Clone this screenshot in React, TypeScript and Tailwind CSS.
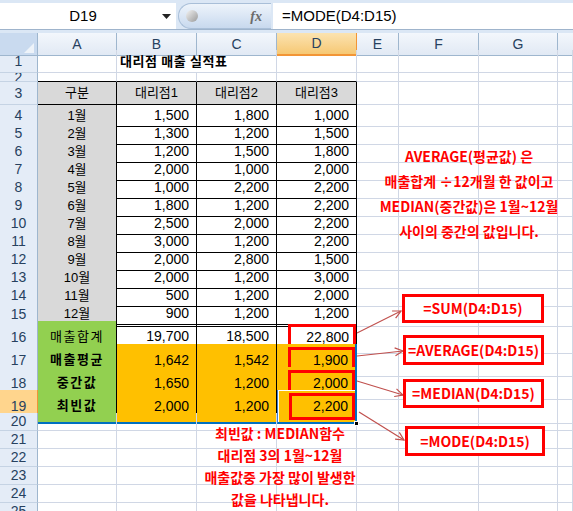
import React from "react";

const COLS = "grid grid-cols-[38px_79px_80px_80px_80px_42px_80px_79px_1fr]";
const GRID = "border-r border-b border-[#d0d7e5]";
const RED = "font-['Noto_Sans_CJK_KR',sans-serif] font-bold text-[14px] text-[#ff0000] whitespace-nowrap";

const months: [string, string, string, string][] = [
  ["1월", "1,500", "1,800", "1,000"],
  ["2월", "1,300", "1,200", "1,500"],
  ["3월", "1,200", "1,500", "1,800"],
  ["4월", "2,000", "1,000", "2,000"],
  ["5월", "1,000", "2,200", "2,200"],
  ["6월", "1,800", "1,200", "2,200"],
  ["7월", "2,500", "2,000", "2,200"],
  ["8월", "3,000", "1,200", "2,200"],
  ["9월", "2,000", "2,800", "1,500"],
  ["10월", "2,000", "1,200", "3,000"],
  ["11월", "500", "1,200", "2,000"],
  ["12월", "900", "1,200", "1,200"],
];

function RowHead({ n, active }: { n: number; active?: boolean }) {
  return (
    <div
      className={
        active
          ? "flex items-center justify-center overflow-hidden border-r border-b border-[#f29536] bg-[#ffd58d] text-[14px] text-[#27415f]"
          : "flex items-center justify-center overflow-hidden border-r border-b border-r-[#9eb6ce] border-b-[#c5d3e4] bg-[#e4ecf7] text-[14px] text-[#27415f]"
      }
    >
      {n}
    </div>
  );
}

function Empty({ n }: { n: number }) {
  return (
    <>
      {Array.from({ length: n }).map((_, i) => (
        <div key={i} className={GRID} />
      ))}
    </>
  );
}

function ColHead({ c, active }: { c: string; active?: boolean }) {
  return (
    <div
      className={
        active
          ? "flex items-center justify-center border-r border-b-2 border-r-[#f29536] border-b-[#f29536] bg-gradient-to-b from-[#fbe3b0] to-[#f6c873] text-[14px] text-[#27415f]"
          : "flex items-center justify-center border-r border-b border-[#9eb6ce] bg-gradient-to-b from-[#f3f7fc] to-[#e1e9f4] text-[14px] text-[#27415f]"
      }
    >
      {c}
    </div>
  );
}

function RedBox({ v, top }: { v: string; top: string }) {
  return (
    <div className={`flex items-stretch pl-[11px] ${top}`}>
      <div className="flex flex-1 items-center justify-end border-[3px] border-[#ff0000] pr-[4px] text-[14px]">
        {v}
      </div>
    </div>
  );
}

export default function App() {
  return (
    <div className="relative h-[511px] w-[573px] overflow-hidden bg-white font-['Liberation_Sans','Noto_Sans_CJK_KR',sans-serif] text-black">
      {/* formula bar */}
      <div className="h-[33px] bg-[#dbe7f5] pt-[3px]">
        <div className="flex h-[27px] border-b border-[#9fb4cc]">
          <div className="flex w-[176px] items-center bg-white">
            <span className="flex-1 pl-[4px] text-center text-[15px]">D19</span>
            <svg width="9" height="5" viewBox="0 0 9 5" className="mr-[5px]">
              <path d="M0 0h9L4.5 5z" fill="#222" />
            </svg>
          </div>
          <div className="ml-[2px] flex w-[93px] items-center justify-between rounded-l-full border border-r-0 border-[#a9bfd8] bg-gradient-to-b from-[#eef4fb] to-[#c8d9ee]">
            <div className="ml-[7px] h-[12px] w-[12px] rounded-full bg-gradient-to-br from-[#f4f4f4] to-[#9a9a9a]" />
            <span className="pr-[9px] font-['Liberation_Serif',serif] text-[14px] font-bold italic text-[#6b6b6b]">fx</span>
          </div>
          <div className="ml-[2px] flex flex-1 items-center bg-white pl-[9px] text-[15px]">=MODE(D4:D15)</div>
        </div>
      </div>

      {/* column headers */}
      <div className={`${COLS} h-[17px]`}>
        <div className="relative border-r border-b border-[#9eb6ce] bg-[#c9daef]">
          <svg width="10" height="10" className="absolute right-[3px] bottom-[2px]">
            <path d="M10 0V10H0z" fill="#eef3f9" />
          </svg>
        </div>
        <ColHead c="A" />
        <ColHead c="B" />
        <ColHead c="C" />
        <ColHead c="D" active />
        <ColHead c="E" />
        <ColHead c="F" />
        <ColHead c="G" />
        <div className="border-b border-[#9eb6ce] bg-gradient-to-b from-[#f3f7fc] to-[#e1e9f4]" />
      </div>

      {/* row 1 */}
      <div className={`${COLS} h-[23px]`}>
        <RowHead n={1} />
        <div className={GRID} />
        <div className={`col-span-2 flex items-center pl-[3px] text-[13px] font-bold tracking-[0.6px] font-['Noto_Sans_CJK_KR',sans-serif] ${GRID}`}>
          대리점 매출 실적표
        </div>
        <Empty n={5} />
      </div>

      {/* row 2 */}
      <div className={`${COLS} h-[9px]`}>
        <RowHead n={2} />
        <div className="border-r border-r-[#d0d7e5] border-b border-b-black" />
        <div className="border-r border-r-[#d0d7e5] border-b border-b-black" />
        <div className="border-r border-r-[#d0d7e5] border-b border-b-black" />
        <div className="border-r border-r-[#d0d7e5] border-b border-b-black" />
        <Empty n={4} />
      </div>

      {/* row 3 */}
      <div className={`${COLS} h-[23px]`}>
        <RowHead n={3} />
        {["구분", "대리점1", "대리점2", "대리점3"].map((t) => (
          <div key={t} className="flex items-center justify-center border-r border-b border-black bg-[#d9d9d9] text-[13px]">
            {t}
          </div>
        ))}
        <Empty n={4} />
      </div>

      {/* rows 4-15 */}
      {months.map((r, i) => {
        const last = i === months.length - 1;
        const b = last
          ? "border-r border-r-black border-b-[3px] border-double border-b-black"
          : "border-r border-b border-black";
        return (
          <div key={r[0]} className={`${COLS} h-[18px]`}>
            <RowHead n={i + 4} />
            <div className={`flex items-center justify-center bg-[#d9d9d9] text-[13px] ${b}`}>{r[0]}</div>
            <div className={`flex items-center justify-end pr-[7px] text-[14px] ${b}`}>{r[1]}</div>
            <div className={`flex items-center justify-end pr-[7px] text-[14px] ${b}`}>{r[2]}</div>
            <div className={`flex items-center justify-end pr-[7px] text-[14px] ${b}`}>{r[3]}</div>
            <Empty n={4} />
          </div>
        );
      })}

      {/* row 16 */}
      <div className={`${COLS} h-[23px]`}>
        <RowHead n={16} />
        <div className="flex items-center justify-center border-r border-r-black border-b-2 border-b-[#0070c0] bg-[#92d050] text-[13px] tracking-[1.5px]">
          매출합계
        </div>
        <div className="flex items-center justify-end border-r border-r-black border-b-2 border-b-[#0070c0] pr-[7px] text-[14px]">19,700</div>
        <div className="flex items-center justify-end border-r border-r-black border-b-2 border-b-[#0070c0] pr-[7px] text-[14px]">18,500</div>
        <div className="border-r border-r-black border-b-2 border-b-[#0070c0]">
          <RedBox v="22,800" top="h-full pt-[3px] pb-[1px]" />
        </div>
        <Empty n={4} />
      </div>

      {/* rows 17-19 */}
      {[
        ["매출평균", "1,642", "1,542", "1,900"],
        ["중간값", "1,650", "1,200", "2,000"],
        ["최빈값", "2,000", "1,200", "2,200"],
      ].map((r, i) => {
        const last = i === 2;
        const b = last
          ? "border-r border-r-black border-b-2 border-b-[#0070c0]"
          : "border-r border-b border-black";
        const d = last
          ? "relative border-r-2 border-r-[#0070c0] border-b-2 border-b-[#0070c0] border-l border-l-[#3d7fd0] shadow-[inset_1px_1px_0_#ffffff]"
          : "border-r-2 border-r-[#0070c0] border-b border-b-black";
        return (
          <div key={r[0]} className={`${COLS} h-[23px]`}>
            <RowHead n={17 + i} active={last} />
            <div className={`flex items-center justify-center bg-[#92d050] text-[13px] font-bold tracking-[1.5px] ${b}`}>{r[0]}</div>
            <div className={`flex items-center justify-end bg-[#ffc000] pr-[7px] text-[14px] ${b}`}>{r[1]}</div>
            <div className={`flex items-center justify-end bg-[#ffc000] pr-[7px] text-[14px] ${b}`}>{r[2]}</div>
            <div className={`bg-[#ffc000] ${d}`}>
              <RedBox v={r[3]} top="h-full pt-[3px] pb-[2px]" />
              {last && <div className="absolute right-[-4px] bottom-[-4px] h-[5px] w-[5px] border border-white bg-black" />}
            </div>
            <Empty n={4} />
          </div>
        );
      })}

      {/* rows 20-25 */}
      {[20, 21, 22, 23, 24, 25].map((n) => (
        <div key={n} className={`${COLS} h-[18px]`}>
          <RowHead n={n} />
          <Empty n={8} />
        </div>
      ))}

      {/* arrows */}
      <svg className="pointer-events-none absolute top-0 left-0" width="573" height="511">
        <defs>
          <marker id="ah" markerWidth="10" markerHeight="10" refX="9" refY="5" orient="auto" markerUnits="userSpaceOnUse">
            <path d="M1 1L9 5L1 9" fill="none" stroke="#c0504d" strokeWidth="1.2" />
          </marker>
        </defs>
        <g stroke="#c0504d" strokeWidth="1.2" fill="none" markerEnd="url(#ah)">
          <line x1="357" y1="333" x2="401" y2="311" />
          <line x1="357" y1="356" x2="403" y2="351" />
          <line x1="357" y1="381" x2="403" y2="395" />
          <line x1="359" y1="412" x2="404" y2="440" />
        </g>
      </svg>

      {/* formula boxes */}
      <div className={`absolute top-[294px] left-[402px] flex h-[29px] w-[142px] items-center justify-center border-[3px] border-[#ff0000] bg-white ${RED}`}>
        =SUM(D4:D15)
      </div>
      <div className={`absolute top-[335px] left-[403px] flex h-[30px] w-[141px] items-center justify-center border-[3px] border-[#ff0000] bg-white ${RED}`}>
        =AVERAGE(D4:D15)
      </div>
      <div className={`absolute top-[379px] left-[403px] flex h-[29px] w-[141px] items-center justify-center border-[3px] border-[#ff0000] bg-white ${RED}`}>
        =MEDIAN(D4:D15)
      </div>
      <div className={`absolute top-[426px] left-[405px] flex h-[30px] w-[140px] items-center justify-center border-[3px] border-[#ff0000] bg-white ${RED}`}>
        =MODE(D4:D15)
      </div>

      {/* notes */}
      <div className={`absolute top-[144px] left-[360px] w-[218px] text-center leading-[25px] ${RED}`}>
        <div>AVERAGE(평균값) 은</div>
        <div>매출합계 ÷12개월 한 값이고</div>
        <div>MEDIAN(중간값)은 1월~12월</div>
        <div>사이의 중간의 값입니다.</div>
      </div>
      <div className={`absolute top-[422px] left-[180px] w-[200px] text-center leading-[22px] ${RED}`}>
        <div>최빈값 : MEDIAN함수</div>
        <div>대리점 3의 1월~12월</div>
        <div>매출값중 가장 많이 발생한</div>
        <div>값을 나타냅니다.</div>
      </div>
    </div>
  );
}
